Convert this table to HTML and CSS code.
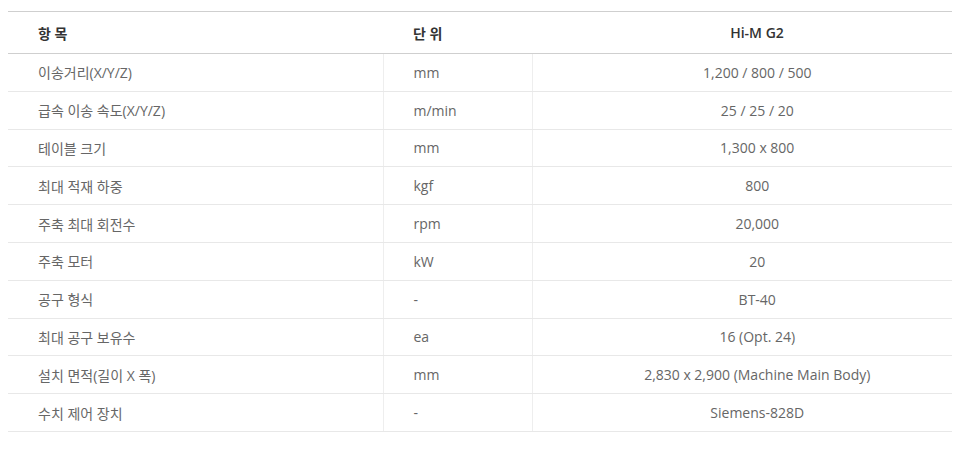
FILE: index.html
```html
<!DOCTYPE html>
<html lang="ko">
<head>
<meta charset="utf-8">
<link rel="stylesheet" href="styles.css">
</head>
<body>
<table class="spec">
  <colgroup>
    <col class="c1"><col class="c2"><col class="c3">
  </colgroup>
  <thead>
    <tr><th>항 목</th><th>단 위</th><th class="val">Hi-M G2</th></tr>
  </thead>
  <tbody>
    <tr><td>이송거리(X/Y/Z)</td><td>mm</td><td class="val">1,200 / 800 / 500</td></tr>
    <tr><td>급속 이송 속도(X/Y/Z)</td><td>m/min</td><td class="val">25 / 25 / 20</td></tr>
    <tr><td>테이블 크기</td><td>mm</td><td class="val">1,300 x 800</td></tr>
    <tr><td>최대 적재 하중</td><td>kgf</td><td class="val">800</td></tr>
    <tr><td>주축 최대 회전수</td><td>rpm</td><td class="val">20,000</td></tr>
    <tr><td>주축 모터</td><td>kW</td><td class="val">20</td></tr>
    <tr><td>공구 형식</td><td>-</td><td class="val">BT-40</td></tr>
    <tr><td>최대 공구 보유수</td><td>ea</td><td class="val">16 (Opt. 24)</td></tr>
    <tr><td>설치 면적(길이 X 폭)</td><td>mm</td><td class="val">2,830 x 2,900 (Machine Main Body)</td></tr>
    <tr><td>수치 제어 장치</td><td>-</td><td class="val">Siemens-828D</td></tr>
  </tbody>
</table>
</body>
</html>
```
FILE: styles.css
```css
html, body { margin: 0; background: #fff; }
body { padding: 11px 13px 0 8px; font-family: "Open Sans", "Noto Sans CJK KR", sans-serif; font-size: 14px; }
.spec { width: 944px; border-collapse: collapse; table-layout: fixed; }
.c1 { width: 375px; }
.c2 { width: 149px; }
.c3 { width: 420px; }
.spec th { height: 42px; padding: 0 0 0 30px; text-align: left; font-weight: 600; color: #333; border-top: 1px solid #cfcfcf; border-bottom: 1px solid #cfcfcf; box-sizing: border-box; }
.spec td { height: 37.8px; padding: 0 0 0 30px; text-align: left; color: #666; border-bottom: 1px solid #e8e8e8; box-sizing: border-box; }
.spec td + td { border-left: 1px solid #eeeeee; }
.spec .val { text-align: center; }
```
